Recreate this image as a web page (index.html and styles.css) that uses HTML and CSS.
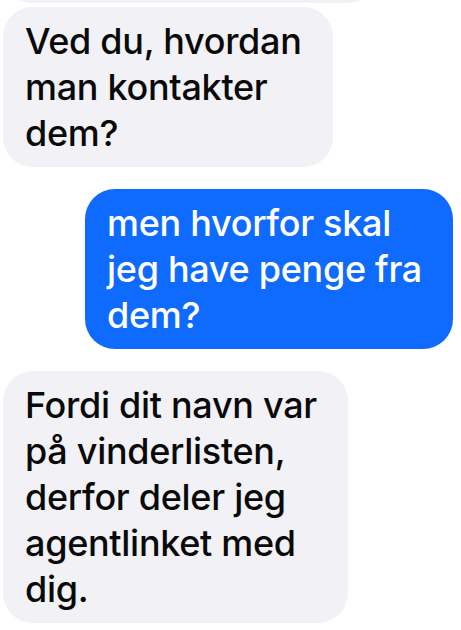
FILE: index.html
```html
<!DOCTYPE html>
<html lang="da">
<head>
    <meta charset="UTF-8">
    <meta name="viewport" content="width=device-width, initial-scale=1.0">
    <title>Beskeder</title>
    <link rel="stylesheet" href="styles.css">
</head>
<body>
    <div class="thread">
        <div class="bubble received prev"></div>
        <div class="bubble received grouped">Ved du, hvordan<br>man kontakter<br>dem?</div>
        <div class="bubble sent">men hvorfor skal<br>jeg have penge fra<br>dem?</div>
        <div class="bubble received">Fordi dit navn var<br>på vinderlisten,<br>derfor deler jeg<br>agentlinket med<br>dig.</div>
    </div>
</body>
</html>
```

FILE: styles.css
```css
body {
    font-family: Inter, "Noto Sans", sans-serif;
    margin: 0;
    background: #fff;
}
.thread {
    display: flex;
    flex-direction: column;
    padding: 0 8px 0 3px;
}
.bubble {
    font-size: 36px;
    font-weight: 500;
    line-height: 46px;
    padding: 11px 31px 11px 22px;
    border-radius: 30px;
    margin-top: 22px;
    letter-spacing: -0.3px;
}
.received {
    align-self: flex-start;
    background: #f1f1f6;
    color: #0a0a0a;
}
.sent {
    align-self: flex-end;
    background: #0f6bfd;
    color: #fff;
}
.prev {
    width: 322px;
    height: 60px;
    padding: 0 30px 0 22px;
    margin-top: -57px;
}
.grouped {
    margin-top: 4px;
}
```
